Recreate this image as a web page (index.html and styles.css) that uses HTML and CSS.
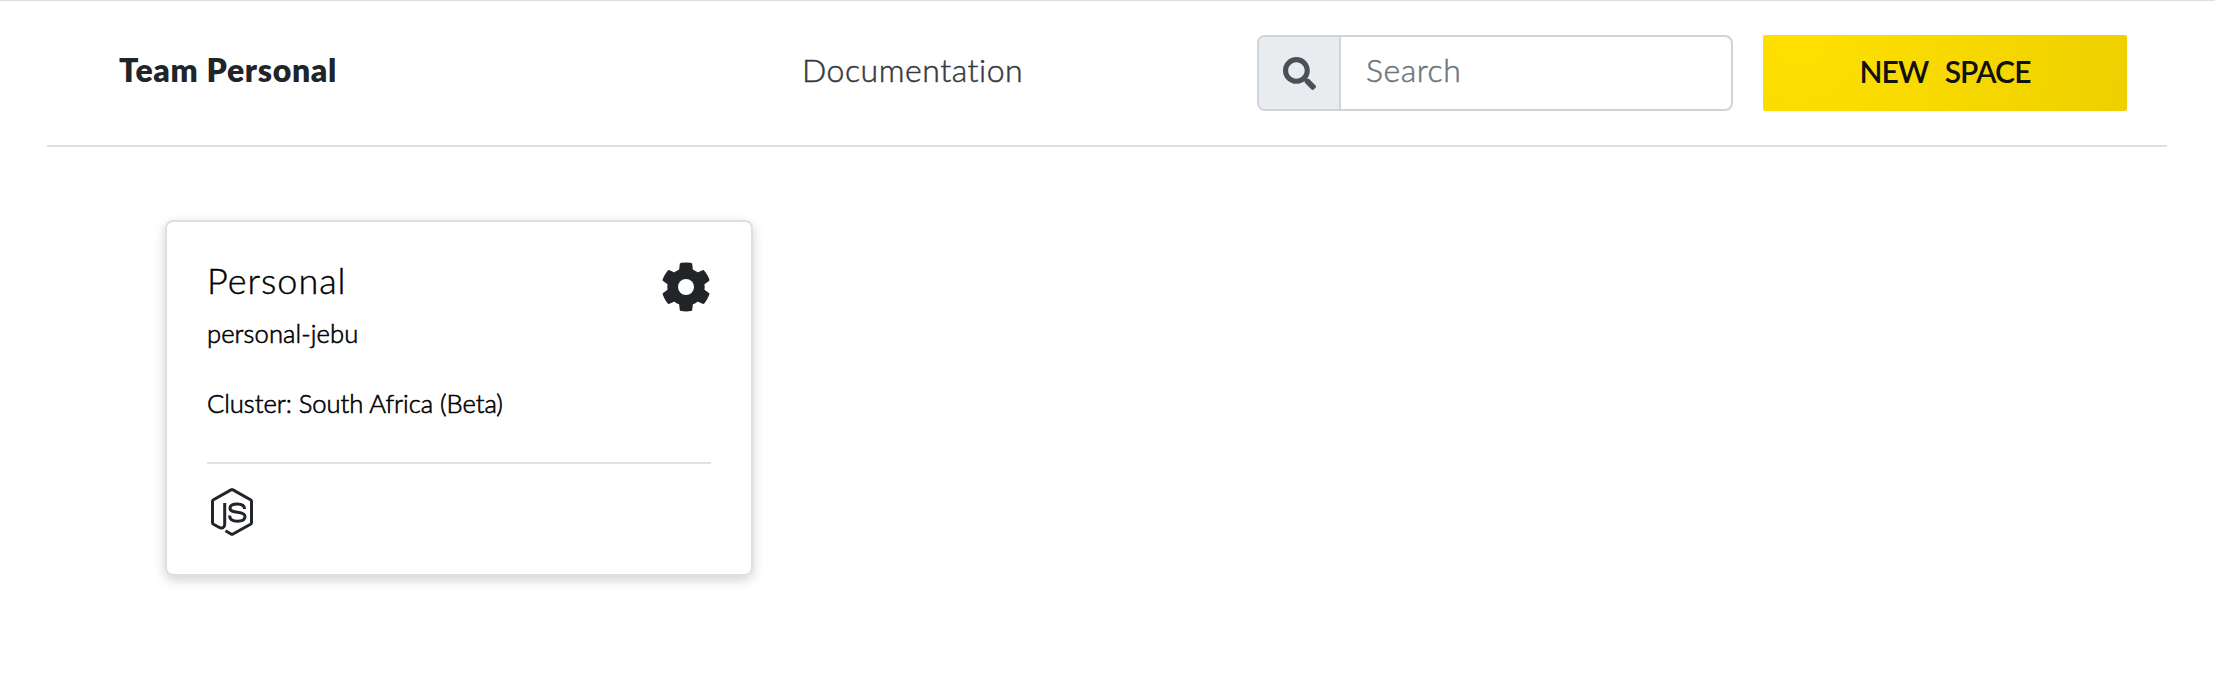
FILE: index.html
```html
<!DOCTYPE html>
<html lang="en">
<head>
<meta charset="utf-8">
<title>Team Personal</title>
<link rel="stylesheet" href="styles.css">
</head>
<body>
<div class="page">
  <header class="topbar">
    <h1 class="team">Team Personal</h1>
    <a class="docs">Documentation</a>
    <div class="search">
      <span class="search-addon">
        <svg width="33" height="33" viewBox="0 0 512 512"><path fill="#495057" d="M505 442.700L405.300 343c-4.500-4.500-10.600-7-17-7H372c27.600-35.300 44-79.700 44-128C416 93.100 322.900 0 208 0S0 93.100 0 208s93.100 208 208 208c48.300 0 92.700-16.400 128-44v16.300c0 6.400 2.500 12.500 7 17l99.700 99.700c9.400 9.400 24.600 9.400 33.900 0l28.300-28.300c9.400-9.400 9.400-24.600.1-34zM208 336c-70.700 0-128-57.200-128-128 0-70.700 57.200-128 128-128 70.700 0 128 57.200 128 128 0 70.700-57.200 128-128 128z"/></svg>
      </span>
      <span class="search-field">Search</span>
    </div>
    <button class="new-space">NEW SPACE</button>
  </header>
  <main class="spaces">
    <article class="card">
      <div class="card-head">
        <div>
          <h2 class="card-title">Personal</h2>
          <p class="card-slug">personal-jebu</p>
        </div>
        <svg class="gear" width="50" height="50" viewBox="-25 -25 50 50">
          <defs><path id="tooth" d="M-7-16L-6.200-23.300Q-6-24.300 0-24.400Q6-24.300 6.200-23.300L7-16Z"/></defs>
          <g fill="#212529">
            <use href="#tooth"/><use href="#tooth" transform="rotate(60)"/><use href="#tooth" transform="rotate(120)"/>
            <use href="#tooth" transform="rotate(180)"/><use href="#tooth" transform="rotate(240)"/><use href="#tooth" transform="rotate(300)"/>
            <circle r="18.700"/>
          </g>
          <circle r="8" fill="#fff"/>
        </svg>
      </div>
      <p class="card-cluster">Cluster: South Africa (Beta)</p>
      <div class="card-foot">
        <svg width="44" height="50" viewBox="0 0 44 50" fill="none" stroke="#212529" stroke-width="3">
          <path stroke-linejoin="round" d="M14.700 16V37.500C14.700 40.500 12 42 9 40.300L3.500 37.200Q2.500 36.600 2.500 35.500V14.500Q2.500 13.400 3.500 12.800L21 2.900Q22 2.300 23 2.900L40.500 12.800Q41.500 13.400 41.500 14.500V35.500Q41.500 36.600 40.500 37.200L23 47Q22 47.600 21 47L15.500 43.800"/>
          <path d="M34.600 22C34.400 18.400 31.500 17 27.300 17C23 17 20 18.600 20 21.300C20 24.200 23 24.700 27.500 25.200C32 25.700 35 26.400 35 29.500C35 32.800 31.700 34.200 27.400 34.200C22.500 34.200 19.700 32.500 19.500 28.500"/>
        </svg>
      </div>
    </article>
  </main>
</div>
</body>
</html>
```
FILE: styles.css
```css
* { box-sizing: border-box; }
body { margin: 0; background: #fff; font-family: Lato, "Open Sans", sans-serif; color: #212529; }
h1, h2, p { margin: 0; }
svg { display: block; }
.page { height: 679px; border-top: 1px solid #dedede; padding: 0 48px 0 47px; overflow: hidden; }
.topbar {
  display: grid;
  grid-template-columns: 683px 455px 476px 364px;
  height: 146px;
  padding: 34px 0 0 72px;
  border-bottom: 2px solid #dfdfdf;
}
.team { font-size: 32px; line-height: 70px; font-weight: 800; letter-spacing: .68px; white-space: nowrap; }
.docs { font-size: 32px; line-height: 70px; font-weight: 300; letter-spacing: .53px; -webkit-text-stroke: .5px; color: #343a40; white-space: nowrap; }
.search { display: flex; height: 76px; border: 2px solid #ced4da; border-radius: 8px; overflow: hidden; }
.search-addon { width: 82px; padding: 20px 0 0 24px; background: #e9ecef; border-right: 2px solid #ced4da; }
.search-field { padding-left: 25px; font-size: 32px; line-height: 66px; font-weight: 300; letter-spacing: .5px; -webkit-text-stroke: .5px; color: #6c757d; }
.new-space {
  height: 76px;
  margin-left: 30px;
  width: 364px;
  padding: 0 0 3px;
  border: 0;
  border-radius: 2px;
  background: radial-gradient(circle at 10% 10%, #ffe000, #eed000);
  color: #111;
  font: 600 30px/73px Lato, sans-serif;
  letter-spacing: -.9px;
  word-spacing: 10px;
}
.spaces { padding: 73px 0 0 118px; }
.card {
  width: 588px;
  height: 356px;
  padding: 40px 40px 0;
  border: 2px solid #dfdfdf;
  border-radius: 8px;
  box-shadow: 0 4px 12px rgba(0, 0, 0, .18);
  color: #000;
}
.card-head { display: flex; justify-content: space-between; }
.card-title { margin-top: -4px; font-size: 36px; line-height: 44px; font-weight: 300; letter-spacing: 1px; -webkit-text-stroke: .4px; }
.card-slug, .card-cluster { font-size: 25.600px; line-height: 32px; font-weight: 300; -webkit-text-stroke: .6px; }
.card-slug { margin-top: 15px; letter-spacing: .08px; }
.card-cluster { margin-top: 38px; letter-spacing: -.05px; }
.card-foot { margin-top: 43px; padding: 23px 0 0 3px; border-top: 2px solid #dee2e6; }
```
